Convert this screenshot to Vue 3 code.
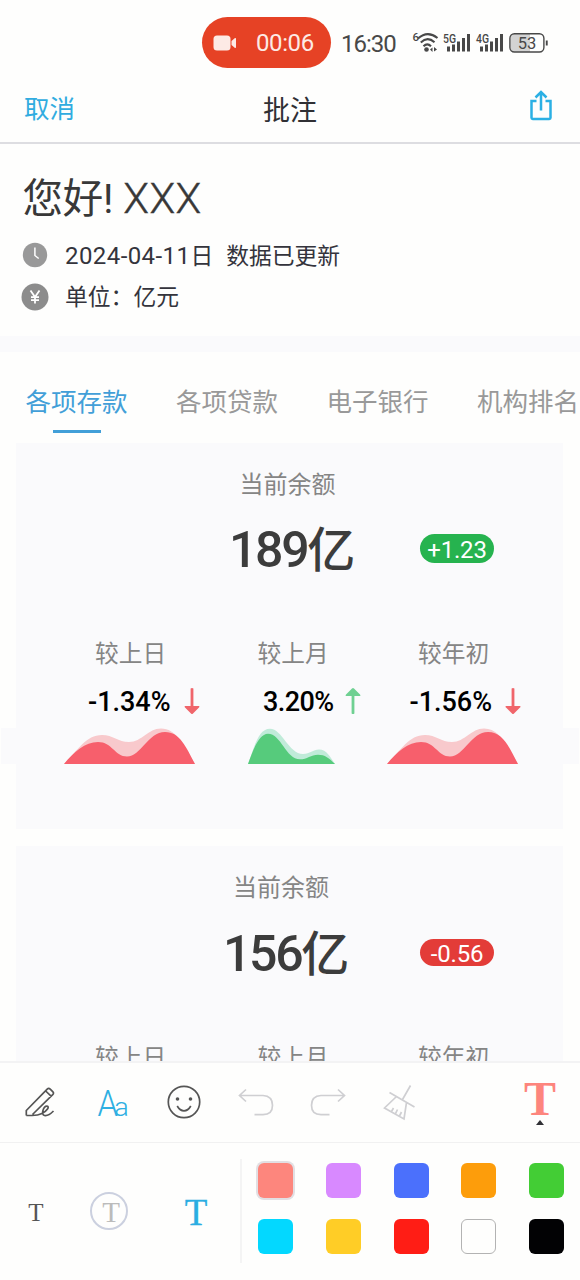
<script setup>
const tabs = ['各项存款', '各项贷款', '电子银行', '机构排名']

const redWave = {
  width: 131,
  back: 'M0 36C14 22 22 7 38 7C49 7 54 14 65 14C78 14 84 .5 97 .5C112 .5 119 16 131 36Z',
  front: 'M0 36C10 24 21 14 34 14C48 14 51 28.5 63 28.5C77 28.5 84 4 101 4C116 4 122 19 131 36Z',
}
const greenWave = {
  width: 88,
  back: 'M0 36C6 20 10 .7 22 .7C34 .7 41 26 55 26C62 26 65 21.5 71 21.5C79 21.5 82 29 87 36Z',
  front: 'M0 36C5 22 11 5.7 20 5.7C33 5.7 38 31.3 52 31.3C59 31.3 63 26.7 70 26.7C77 26.7 81 30 87 36Z',
}

const metrics = [
  { label: '较上日', value: '-1.34%', dir: 'down', wave: redWave },
  { label: '较上月', value: '3.20%', dir: 'up', wave: greenWave },
  { label: '较年初', value: '-1.56%', dir: 'down', wave: redWave },
]

const cards = [
  { name: 'first', amount: '189', delta: '+1.23', tone: 'gain' },
  { name: 'second', amount: '156', delta: '-0.56', tone: 'loss' },
]

const colors = ['salmon', 'violet', 'blue', 'orange', 'green', 'cyan', 'yellow', 'red', 'white', 'black']
</script>

<template>
  <div class="screen">
    <div class="status">
      <div class="rec">
        <svg width="24" height="18" viewBox="0 0 24 18">
          <rect x="0.5" y="1.5" width="17" height="15" rx="3.5" />
          <path d="M18.5 7L22 4Q23 3.6 23 5V13Q23 14.4 22 14L18.5 11Z" />
        </svg>
        <span>00:06</span>
      </div>
      <span class="time">16:30</span>
      <svg class="signals" width="138" height="26" viewBox="0 0 138 26">
        <text x="0.5" y="11" font-size="11.5">6</text>
        <g fill="none" stroke-width="2.1">
          <path d="M6 8.500Q15.500 0 25.500 8" />
          <path d="M8.8 12.500Q15.500 6 22.500 12.300" />
          <path d="M11.5 16.300Q15.300 12.500 19 16.300" />
        </g>
        <circle cx="14.5" cy="19.500" r="2.3" />
        <path d="M18 19.500L20.500 17.500V22ZM25 19.500L22 17V21.500Z" />
        <text x="31" y="12.500" font-size="12" textLength="13" lengthAdjust="spacingAndGlyphs">5G</text>
        <path d="M35 16.500h3v5h-3zM40 14.500h3V21.500h-3zM45 11.500h3V21.500h-3zM50 8h3V21.500h-3zM55 4h3V21.500h-3z" />
        <text x="64" y="12.500" font-size="12" textLength="13" lengthAdjust="spacingAndGlyphs">4G</text>
        <path d="M68 16.500h3v5h-3zM73 14.500h3V21.500h-3zM78 11.500h3V21.500h-3zM83 8h3V21.500h-3zM88 4h3V21.500h-3z" />
        <path class="charge" d="M102 4H118V22H102Q98.500 22 98.500 17V9Q98.500 4 102 4Z" />
        <rect x="97.900" y="3.700" width="34" height="18.300" rx="4.500" fill="none" stroke-width="1.400" />
        <path d="M133.800 10.500h1.900v5h-1.900z" />
        <text class="level" x="115" y="18.500" font-size="16.500" text-anchor="middle">53</text>
      </svg>
    </div>

    <nav class="nav">
      <span class="cancel">取消</span>
      <span class="title">批注</span>
      <svg class="share" width="24" height="32" viewBox="0 0 24 32">
        <path d="M7.500 12H2.500V28.800Q2.500 30 3.700 30H20.300Q21.500 30 21.500 28.800V12H16.500M12 3V21.500M6.500 8.500L12 3L17.500 8.500" />
      </svg>
    </nav>

    <header class="intro">
      <h1>您好! <span>XXX</span></h1>
      <div class="info">
        <svg width="28" height="28" viewBox="0 0 28 28">
          <circle class="clock" cx="14" cy="14" r="12.200" />
          <path class="mark" d="M13.900 6.500V14.500L17.700 17.500" />
        </svg>
        <p><span class="date">2024-04-11</span>日<span class="note">数据已更新</span></p>
      </div>
      <div class="info unit">
        <svg width="28" height="28" viewBox="0 0 28 28">
          <circle class="coin" cx="14" cy="14" r="13.500" />
          <path class="mark yen" d="M9.500 7.500L14 14L18.500 7.500M14 14V20.500M10 14.200H18M10 17.200H18" />
        </svg>
        <p>单位：亿元</p>
      </div>
    </header>

    <div class="tabs">
      <span v-for="(tab, i) in tabs" :key="tab" :class="{ active: i === 0 }">{{ tab }}</span>
    </div>

    <main class="cards">
      <section v-for="card in cards" :key="card.name" class="card" :class="card.name">
        <div class="caption">当前余额</div>
        <div class="balance">
          <div class="amount">{{ card.amount }}<span>亿</span></div>
          <div class="delta" :class="card.tone">{{ card.delta }}</div>
        </div>
        <div class="metrics">
          <div v-for="m in metrics" :key="m.label" class="metric">
            <div class="label">{{ m.label }}</div>
            <div class="value">
              <span>{{ m.value }}</span>
              <svg width="16" height="28" viewBox="0 0 16 28" :class="m.dir">
                <path d="M6.600 1.500Q8 .5 9.400 1.500V19H15Q16 19.500 15 20.500L9 26.500Q8 27.500 7 26.500L1 20.500Q0 19.500 1 19H6.600Z" />
              </svg>
            </div>
            <svg class="wave" :class="m.dir" :width="m.wave.width" height="37">
              <path class="back" :d="m.wave.back" />
              <path class="front" :d="m.wave.front" />
            </svg>
          </div>
        </div>
      </section>
    </main>

    <div class="toolbar">
      <svg viewBox="0 0 40 40">
        <path d="M6.300 33.500V28.500L27.200 7.200Q28.700 5.700 30.200 7.200L32.700 9.700Q34.200 11.200 32.700 12.700L12.500 32.500M25.700 9L31.300 14.300M6.300 33.500H12Q18 33.500 22 31.500C27 29 30 24.500 27 24.200C23.500 24 20.500 32.500 24.500 33.500C27 34 30 32.500 33.500 29" />
      </svg>
      <svg class="fontIcon" viewBox="0 0 40 40">
        <text x="5.500" y="33.500" font-size="37.500" textLength="20.500" lengthAdjust="spacingAndGlyphs">A</text>
        <text x="22.300" y="33.500" font-size="26" textLength="14.500" lengthAdjust="spacingAndGlyphs">a</text>
      </svg>
      <svg viewBox="0 0 40 40">
        <circle cx="20" cy="20" r="15.700" />
        <path d="M13.200 24Q16 28.800 20 28.800T26.800 24" />
        <circle class="eye" cx="13.500" cy="17" r="1.800" />
        <circle class="eye" cx="26.500" cy="17" r="1.800" />
      </svg>
      <svg class="off" viewBox="0 0 40 40">
        <path d="M10 7.500L3.500 13.500L10 19.500M3.500 13.500H27Q36.500 14 36.500 23.300Q36.500 32.700 27 32.700H18.500" />
      </svg>
      <svg class="off" viewBox="0 0 40 40">
        <path d="M30 7.500L36.500 13.500L30 19.500M36.500 13.500H13Q3.500 14 3.500 23.300Q3.500 32.700 13 32.700H21.500" />
      </svg>
      <svg class="off" viewBox="0 0 40 40">
        <path d="M30.500 3.500L22.500 17.500M9.500 10.500L34.500 25M16.500 14.500L4.500 26L24 37L26.500 20.500M11.500 29.500L13.500 26M15.500 31.700L17.500 27.500M19.500 34L21.500 30" />
      </svg>
      <div class="current"><span>T</span><i></i></div>
    </div>

    <footer class="options">
      <div class="sizes">
        <span class="small">T</span>
        <span class="medium">T</span>
        <span class="large">T</span>
      </div>
      <div class="palette">
        <i v-for="c in colors" :key="c" :class="c"></i>
      </div>
    </footer>
  </div>
</template>

<style>
body {
  background: #fefefd;
}
</style>

<style scoped>
.screen {
  width: 580px;
  height: 1280px;
  overflow: hidden;
  display: flex;
  flex-direction: column;
  background: #fefefd;
  color: #333;
  font-family: Roboto, "Noto Sans CJK SC", sans-serif;
  white-space: nowrap;
}
.screen > * {
  flex: none;
  box-sizing: border-box;
}
svg {
  display: block;
  flex: none;
}

.status {
  height: 76px;
  padding: 17px 0 8px 202px;
  display: flex;
  align-items: flex-start;
}
.rec {
  box-sizing: border-box;
  width: 129px;
  height: 51px;
  padding-left: 11px;
  border-radius: 26px;
  background: #e64225;
  color: #fdeae5;
  display: flex;
  align-items: center;
  gap: 19px;
  font-size: 24px;
  line-height: 51px;
}
.rec span {
  padding-top: 2px;
  letter-spacing: -0.400px;
}
.rec svg {
  fill: #fdeae5;
}
.time {
  width: 71px;
  margin-left: 10px;
  font-size: 24px;
  line-height: 55px;
  letter-spacing: -1px;
  color: #484848;
}
.signals {
  margin-top: 13px;
  fill: #484848;
  stroke: #484848;
  stroke-width: 0;
}
.signals text {
  font-weight: 500;
}
.signals .level {
  font-weight: 400;
}
.signals .charge {
  fill: #d3d3d3;
}

.nav {
  height: 68px;
  padding: 0 27px 0 24px;
  border-bottom: 2px solid #dddde1;
  display: flex;
}
.cancel {
  width: 239px;
  font-size: 25.500px;
  line-height: 67px;
  color: #31ace0;
}
.title {
  width: 266px;
  font-size: 27px;
  line-height: 70px;
  color: #303034;
}
.share {
  margin-top: 13px;
  fill: none;
  stroke: #2bb0e4;
  stroke-width: 2.500;
}

.intro {
  height: 192px;
  padding: 24px 0 0 21px;
}
h1 {
  margin: 0 0 1px 1.500px;
  font-size: 40.500px;
  line-height: 62px;
  font-weight: 400;
  letter-spacing: -0.2px;
  color: #383838;
}
h1 span {
  font-size: 42px;
  font-weight: 300;
  letter-spacing: 0.500px;
  -webkit-text-stroke: 0.400px #383838;
}
.info {
  height: 40px;
  margin-top: 5px;
  display: flex;
  align-items: center;
  gap: 16px;
  font-size: 22.800px;
  line-height: 42px;
  color: #34343c;
}
.info p {
  margin: 0;
  padding-top: 2px;
}
.unit {
  margin-top: 2px;
}
.date {
  font-size: 24px;
  letter-spacing: 0.42px;
}
.note {
  margin-left: 13px;
}
.clock {
  fill: #999;
}
.coin {
  fill: #8c8c8c;
}
.mark {
  fill: none;
  stroke: #fff;
  stroke-width: 1.500;
}
.yen {
  stroke-width: 1.800;
}

.tabs {
  height: 107px;
  padding: 24px 0 0 25.500px;
  border-top: 16px solid #fafafc;
  display: flex;
  gap: 48.500px;
  font-size: 25.500px;
  line-height: 53px;
  color: #999;
}
.tabs .active {
  color: #429fd8;
}
.active::after {
  content: "";
  display: block;
  width: 48px;
  height: 3px;
  margin: 1px auto 0;
  background: #429fd8;
}

.cards {
  height: 618px;
  padding: 0 17px 0 16px;
  display: flex;
  flex-direction: column;
  gap: 17px;
  overflow: hidden;
  background: linear-gradient(#fafafc, #fafafc) 1px 285px / 578px 36px no-repeat;
}
.card {
  box-sizing: border-box;
  flex: none;
  height: 386px;
  padding-top: 21px;
  background: #fafafc;
}
.caption {
  margin-left: 223.500px;
  font-size: 24px;
  height: 42px;
  line-height: 43px;
  color: #858585;
}
.balance {
  height: 80px;
  margin: 3px 0 0 213px;
  display: flex;
}
.amount {
  width: 191px;
  font-size: 50px;
  line-height: 83px;
  font-weight: 500;
  letter-spacing: -2.300px;
  color: #3c3c3c;
}
.amount span {
  font-size: 48px;
}
.delta {
  width: 74px;
  height: 29px;
  margin-top: 25px;
  border-radius: 15px;
  font-size: 24px;
  line-height: 32px;
  text-align: center;
  letter-spacing: -0.2px;
  color: #fff;
}
.gain {
  background: #26b34f;
}
.loss {
  height: 27px;
  margin-top: 26px;
  line-height: 30px;
  background: #e33c38;
}
.second .caption {
  margin-left: 217px;
}
.second .balance {
  margin: 4px 0 0 207px;
}
.second .amount {
  width: 197px;
}
.metrics {
  margin: 43px 0 0 48px;
  display: grid;
  grid-template-columns: 184px 139px 1fr;
}
.label {
  margin-left: 31px;
  font-size: 23.700px;
  line-height: 44px;
  height: 42px;
  color: #858585;
}
.value {
  height: 28px;
  margin: 13px 0 0 24px;
  display: flex;
  font-size: 27px;
  line-height: 31px;
  font-weight: 500;
  letter-spacing: 0;
  color: #000;
}
.value span {
  width: 95.500px;
}
.metric:nth-child(2) .label {
  margin-left: 9.500px;
}
.metric:nth-child(2) .value {
  margin-left: 15px;
  letter-spacing: -0.600px;
}
.metric:nth-child(2) .value span {
  width: 82px;
}
.metric:nth-child(3) .value {
  margin-left: 22.500px;
}
.value .down {
  fill: #f0656b;
}
.value .up {
  fill: #6fd092;
  transform: rotate(180deg);
}
.wave {
  margin-top: 13px;
}
.down .back,
.wave.down .back {
  fill: #f8c9cc;
}
.wave.down .front {
  fill: #f75f6c;
}
.wave.up .back {
  fill: #c0ebd9;
}
.wave.up .front {
  fill: #56cb7c;
}

.toolbar {
  height: 82px;
  padding: 19px 0 0 20px;
  border-top: 2px solid #f3f3f4;
  border-bottom: 1px solid #f1f1f1;
  display: flex;
  gap: 32px;
}
.toolbar svg {
  width: 40px;
  height: 40px;
  overflow: visible;
  fill: none;
  stroke: #555;
  stroke-width: 1.700;
}
.toolbar .off {
  stroke: #cfcfd2;
}
.toolbar .eye {
  fill: #555;
  stroke: none;
}
.toolbar .fontIcon {
  fill: #2eafe2;
  stroke: none;
  font-weight: 300;
}
.current {
  width: 40px;
  margin: -2px 0 0 68px;
  display: flex;
  flex-direction: column;
  align-items: center;
}
.current span {
  height: 40px;
  font: bold 48px/38px "Liberation Serif", serif;
  color: #fd857d;
}
.current i {
  border: solid transparent;
  border-width: 0 4px 5px;
  border-bottom-color: #303035;
}

.options {
  height: 137px;
  padding-top: 16px;
  display: flex;
}
.sizes {
  box-sizing: border-box;
  width: 242px;
  height: 104px;
  padding-left: 16px;
  border-right: 2px solid #f4f4f4;
  display: grid;
  grid-template-columns: 40px 105px 70px;
  align-items: center;
  text-align: center;
  font-family: "Liberation Serif", serif;
}
.small {
  padding-top: 3px;
  font-size: 25px;
  color: #555;
}
.medium {
  box-sizing: border-box;
  width: 38px;
  height: 38px;
  padding-left: 5px;
  justify-self: center;
  border: 2px solid #cbd0df;
  border-radius: 50%;
  font-size: 29px;
  line-height: 36px;
  color: #bbb;
}
.large {
  padding-top: 2px;
  font-size: 37px;
  color: #2bade2;
  -webkit-text-stroke: 0.300px #2bade2;
}
.palette {
  padding: 4px 0 0 16px;
  display: grid;
  grid-template-columns: repeat(5, 35px);
  grid-auto-rows: 35px;
  gap: 21px 32.750px;
}
.palette i {
  box-sizing: border-box;
  border-radius: 6px;
}
.salmon {
  background: #fd867d;
  box-shadow: 0 0 0 2px #e2dfe3;
}
.violet {
  background: #d889ff;
}
.blue {
  background: #4b70fc;
}
.orange {
  background: #fd9d0b;
}
.green {
  background: #43cd35;
}
.cyan {
  background: #03d8ff;
}
.yellow {
  background: #ffcd26;
}
.red {
  background: #ff1d15;
}
.white {
  border: 1px solid #b3b3b3;
}
.black {
  background: #020204;
}
</style>
